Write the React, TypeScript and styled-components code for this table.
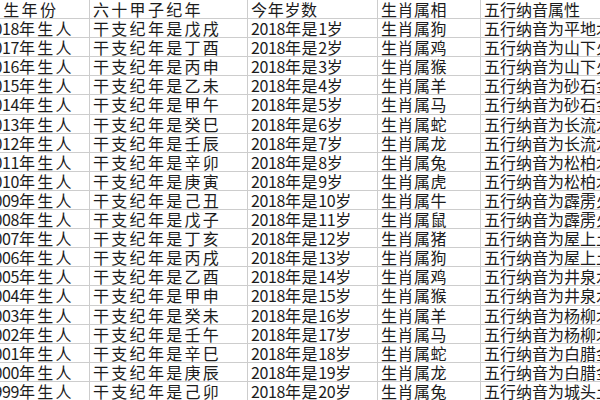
import styled, { createGlobalStyle } from "styled-components";

const GlobalStyle = createGlobalStyle`
  html, body {
    margin: 0;
    padding: 0;
    background: #ffffff;
    overflow: hidden;
  }
`;

interface Entry {
  year: number;
  ganzhi: string;
  zodiac: string;
  nayin: string;
}

const rows: Entry[] = [
  { year: 2018, ganzhi: "戊戌", zodiac: "狗", nayin: "平地木" },
  { year: 2017, ganzhi: "丁酉", zodiac: "鸡", nayin: "山下火" },
  { year: 2016, ganzhi: "丙申", zodiac: "猴", nayin: "山下火" },
  { year: 2015, ganzhi: "乙未", zodiac: "羊", nayin: "砂石金" },
  { year: 2014, ganzhi: "甲午", zodiac: "马", nayin: "砂石金" },
  { year: 2013, ganzhi: "癸巳", zodiac: "蛇", nayin: "长流水" },
  { year: 2012, ganzhi: "壬辰", zodiac: "龙", nayin: "长流水" },
  { year: 2011, ganzhi: "辛卯", zodiac: "兔", nayin: "松柏木" },
  { year: 2010, ganzhi: "庚寅", zodiac: "虎", nayin: "松柏木" },
  { year: 2009, ganzhi: "己丑", zodiac: "牛", nayin: "霹雳火" },
  { year: 2008, ganzhi: "戊子", zodiac: "鼠", nayin: "霹雳火" },
  { year: 2007, ganzhi: "丁亥", zodiac: "猪", nayin: "屋上土" },
  { year: 2006, ganzhi: "丙戌", zodiac: "狗", nayin: "屋上土" },
  { year: 2005, ganzhi: "乙酉", zodiac: "鸡", nayin: "井泉水" },
  { year: 2004, ganzhi: "甲申", zodiac: "猴", nayin: "井泉水" },
  { year: 2003, ganzhi: "癸未", zodiac: "羊", nayin: "杨柳木" },
  { year: 2002, ganzhi: "壬午", zodiac: "马", nayin: "杨柳木" },
  { year: 2001, ganzhi: "辛巳", zodiac: "蛇", nayin: "白腊金" },
  { year: 2000, ganzhi: "庚辰", zodiac: "龙", nayin: "白腊金" },
  { year: 1999, ganzhi: "己卯", zodiac: "兔", nayin: "城头土" },
];

// spacing per column, the screenshot is a bit stretched on the left
const spacing = [2.3, 2.3, 0.7, 0.5, 0];

const Viewport = styled.div`
  width: 600px;
  height: 400px;
  overflow: hidden;
`;

const Sheet = styled.div`
  margin-left: -18px;
  width: 700px;
`;

const Row = styled.div`
  display: grid;
  grid-template-columns: 108px 158px 130px 103px 200px;
  height: 19.1px;
`;

const Cell = styled.div<{ $gap: number }>`
  box-sizing: border-box;
  height: 19.1px;
  padding-left: 3px;
  border-right: 1px solid #cdcdcd;
  border-bottom: 1px solid #cdcdcd;
  font-family: "Noto Sans CJK SC", "Noto Sans", sans-serif;
  font-size: 16px;
  line-height: 18px;
  letter-spacing: ${(p) => p.$gap}px;
  color: #1c1c1c;
  white-space: nowrap;
  overflow: hidden;
`;

const Num = styled.span`
  letter-spacing: -0.4px;
`;

function Txt({ text }: { text: string }) {
  const parts = text.split(/(\d+)/).filter((p) => p !== "");
  return (
    <>
      {parts.map((p, i) => (/^\d+$/.test(p) ? <Num key={i}>{p}</Num> : <span key={i}>{p}</span>))}
    </>
  );
}

export default function App() {
  const header = ["出生年份", "六十甲子纪年", "今年岁数", "生肖属相", "五行纳音属性"];
  return (
    <Viewport>
      <GlobalStyle />
      <Sheet>
        <Row>
          {header.map((h, i) => (
            <Cell key={h} $gap={spacing[i]}>
              {h}
            </Cell>
          ))}
        </Row>
        {rows.map((r) => (
          <Row key={r.year}>
            <Cell $gap={spacing[0]}>
              <Txt text={`${r.year}年生人`} />
            </Cell>
            <Cell $gap={spacing[1]}>干支纪年是{r.ganzhi}</Cell>
            <Cell $gap={spacing[2]}>
              <Txt text={`2018年是${2018 - r.year + 1}岁`} />
            </Cell>
            <Cell $gap={spacing[3]}>生肖属{r.zodiac}</Cell>
            <Cell $gap={spacing[4]}>五行纳音为{r.nayin}</Cell>
          </Row>
        ))}
      </Sheet>
    </Viewport>
  );
}
